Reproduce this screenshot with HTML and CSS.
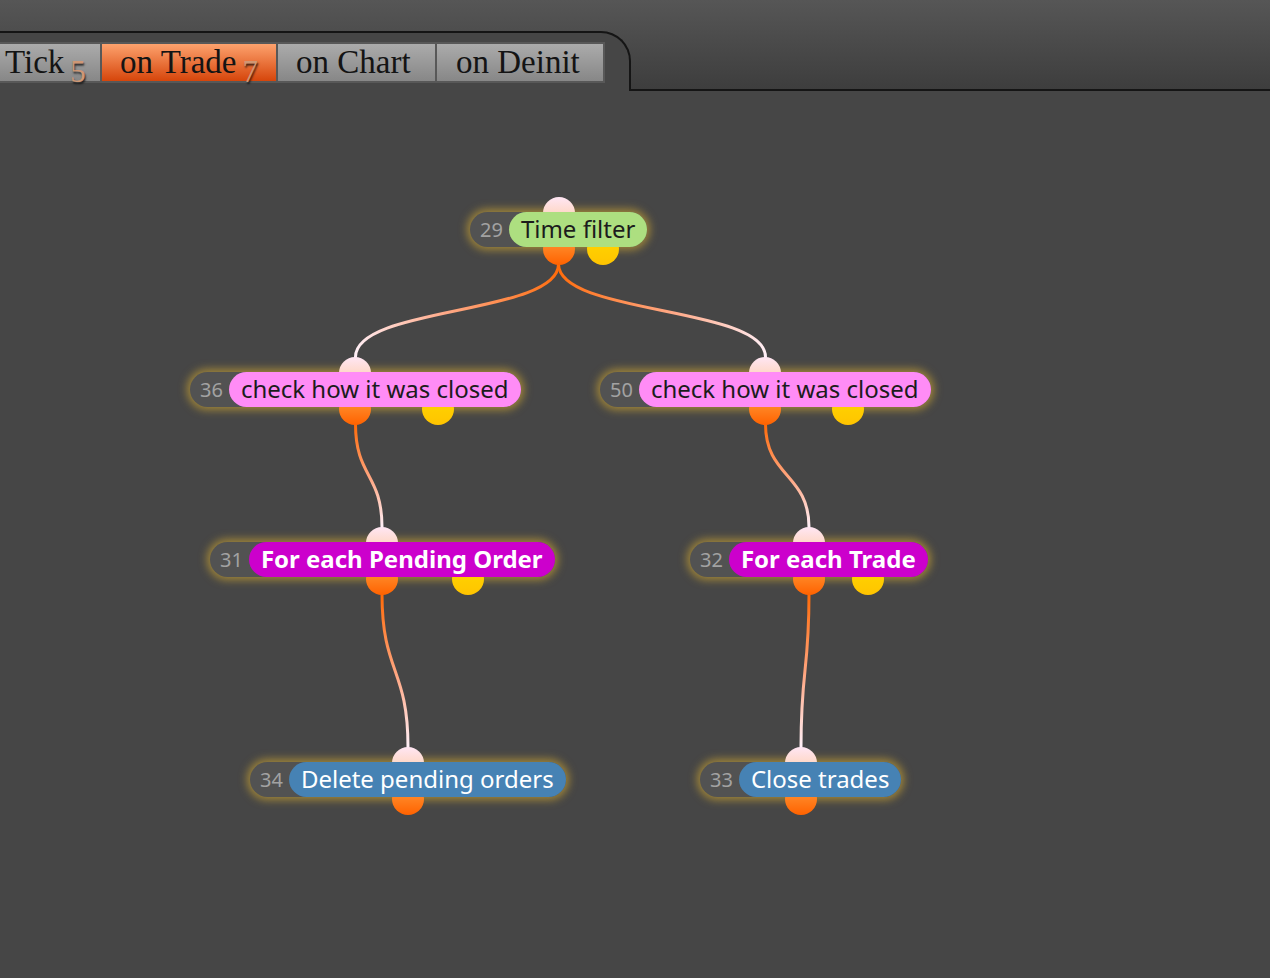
FILE: index.html
```html
<!DOCTYPE html>
<html>
<head>
<meta charset="utf-8">
<title>Strategy editor</title>
<link rel="stylesheet" href="styles.css">
</head>
<body>
<header class="topbar">
  <div class="tabpanel">
    <nav class="tabstrip">
      <div class="tab tab-first">Tick<span class="count">5</span></div>
      <div class="tab tab-active">on Trade<span class="count">7</span></div>
      <div class="tab">on Chart</div>
      <div class="tab">on Deinit</div>
    </nav>
  </div>
  <div class="topfill"></div>
</header>
<main class="canvas">
  <svg class="edges" width="1270" height="887" viewBox="0 0 1270 887">
    <defs>
      <linearGradient id="g1" gradientUnits="userSpaceOnUse" x1="558.5" y1="173" x2="355.5" y2="266"><stop offset="0" stop-color="#ff6a08"/><stop offset="0.55" stop-color="#ffa987"/><stop offset="1" stop-color="#fff0f8"/></linearGradient>
      <linearGradient id="g2" gradientUnits="userSpaceOnUse" x1="558.5" y1="173" x2="765.5" y2="266"><stop offset="0" stop-color="#ff6a08"/><stop offset="0.55" stop-color="#ffa987"/><stop offset="1" stop-color="#fff0f8"/></linearGradient>
      <linearGradient id="g3" gradientUnits="userSpaceOnUse" x1="0" y1="333" x2="0" y2="436"><stop offset="0" stop-color="#ff6a08"/><stop offset="0.55" stop-color="#ffa987"/><stop offset="1" stop-color="#fff0f8"/></linearGradient>
      <linearGradient id="g4" gradientUnits="userSpaceOnUse" x1="0" y1="503" x2="0" y2="656"><stop offset="0" stop-color="#ff6a08"/><stop offset="0.55" stop-color="#ffa987"/><stop offset="1" stop-color="#fff0f8"/></linearGradient>
    </defs>
    <path class="edge" stroke="url(#g1)" d="M558.5 173 C558.5 224 355.5 215 355.5 266"/>
    <path class="edge" stroke="url(#g2)" d="M558.5 173 C558.5 224 765.5 215 765.5 266"/>
    <path class="edge" stroke="url(#g3)" d="M355.5 333 C355.5 386 382 383 382 436"/>
    <path class="edge" stroke="url(#g3)" d="M765.5 333 C765.5 386 809 383 809 436"/>
    <path class="edge" stroke="url(#g4)" d="M382 503 C382 582 408 577 408 656"/>
    <path class="edge" stroke="url(#g4)" d="M809 503 C809 582 801 577 801 656"/>
  </svg>

  <div class="node" style="left:470px;top:121px">
    <span class="num">29</span><span class="label green">Time filter</span>
    <span class="port port-in"></span><span class="port port-out"></span><span class="port port-alt"></span>
  </div>
  <div class="node" style="left:190px;top:281px">
    <span class="num">36</span><span class="label pink">check how it was closed</span>
    <span class="port port-in"></span><span class="port port-out"></span><span class="port port-alt"></span>
  </div>
  <div class="node" style="left:600px;top:281px">
    <span class="num">50</span><span class="label pink">check how it was closed</span>
    <span class="port port-in"></span><span class="port port-out"></span><span class="port port-alt"></span>
  </div>
  <div class="node" style="left:210px;top:451px">
    <span class="num">31</span><span class="label magenta">For each Pending Order</span>
    <span class="port port-in"></span><span class="port port-out"></span><span class="port port-alt"></span>
  </div>
  <div class="node" style="left:690px;top:451px">
    <span class="num">32</span><span class="label magenta">For each Trade</span>
    <span class="port port-in"></span><span class="port port-out"></span><span class="port port-alt"></span>
  </div>
  <div class="node" style="left:250px;top:671px">
    <span class="num">34</span><span class="label blue">Delete pending orders</span>
    <span class="port port-in"></span><span class="port port-out"></span>
  </div>
  <div class="node" style="left:700px;top:671px">
    <span class="num">33</span><span class="label blue">Close trades</span>
    <span class="port port-in"></span><span class="port port-out"></span>
  </div>
</main>
</body>
</html>
```

FILE: styles.css
```css
html, body {
  margin: 0;
  padding: 0;
  width: 1270px;
  height: 978px;
  overflow: hidden;
  background: #464646;
}

.topbar {
  display: flex;
  height: 91px;
  background: linear-gradient(#565656, #3d3d3d);
}

.tabpanel {
  box-sizing: border-box;
  width: 631px;
  height: 60px;
  margin-top: 31px;
  padding-top: 9px;
  background: #464646;
  border-top: 2px solid #151515;
  border-right: 2px solid #151515;
  border-top-right-radius: 30px;
}

.topfill {
  flex: 1;
  border-bottom: 2px solid #151515;
}

.tabstrip {
  display: flex;
  gap: 2px;
  width: 603px;
  margin-left: -2px;
  padding: 2px;
  background: #585858;
}

.tab {
  height: 37px;
  padding: 0 20px 0 18px;
  box-sizing: border-box;
  font-family: "Liberation Serif", "Times New Roman", serif;
  font-size: 33px;
  line-height: 37px;
  color: #141414;
  background: linear-gradient(#ababab, #878787);
  white-space: nowrap;
}

.tab-first {
  width: 100px;
  padding-left: 5px;
}

.tab-active {
  width: 174px;
  background: linear-gradient(#fda26d, #d6450b);
}

.tab:nth-child(3) { width: 157px; }
.tab:nth-child(4) { width: 166px; padding-left: 19px; }

.count {
  display: inline-block;
  margin-left: 6px;
  font-size: 31px;
  color: #cf9774;
  vertical-align: -9px;
  line-height: 24px;
  text-shadow: 1px 2px 2px rgba(0, 0, 0, 0.75);
}

.canvas {
  position: relative;
  height: 887px;
  background: #464646;
}

.edges {
  position: absolute;
  left: 0;
  top: 0;
}

.edge {
  fill: none;
  stroke-width: 3;
  stroke-linecap: round;
}

.node {
  position: absolute;
  display: flex;
  align-items: center;
  height: 35px;
  border-radius: 17.5px;
  background: #525252;
  box-shadow: 0 0 8px 3px rgba(222, 176, 48, 0.6);
  font-family: "Noto Sans", "Open Sans", sans-serif;
  white-space: nowrap;
}

.num {
  padding: 0 6px 0 10px;
  font-size: 20px;
  color: #a2a2a2;
}

.label {
  position: relative;
  z-index: 2;
  height: 35px;
  padding: 0 12px;
  border-radius: 17.5px;
  font-size: 24px;
  line-height: 34px;
  color: #1c1c1c;
}

.green { background: #addf80; }
.pink { background: #ff8cf6; }
.magenta { background: #cc00cc; color: #fff; font-weight: 700; }
.blue { background: #4682b4; color: #fff; }

.port {
  position: absolute;
  z-index: 1;
  width: 32px;
  height: 32px;
  border-radius: 16px;
}

.port-in {
  top: -15px;
  left: calc(50% - 16px);
  background: linear-gradient(#ffe6f4, #fdca9c);
}

.port-out {
  bottom: -18px;
  left: calc(50% - 16px);
  background: linear-gradient(#ffa040, #ff6200);
}

.port-alt {
  bottom: -18px;
  left: calc(75% - 16px);
  background: linear-gradient(#ffd800, #ffc400);
}
```
